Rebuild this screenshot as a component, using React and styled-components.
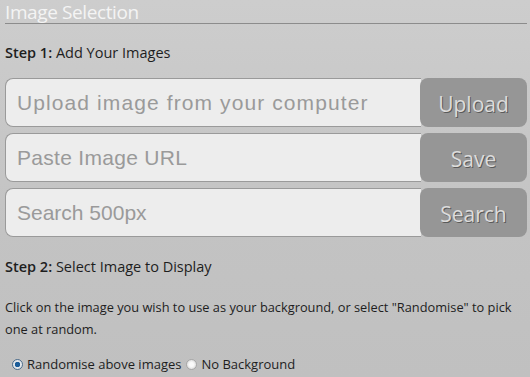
import React from "react";
import styled, { createGlobalStyle } from "styled-components";

const GlobalStyle = createGlobalStyle`
  html, body {
    margin: 0;
    padding: 0;
    background: #c4c4c4;
  }
  body {
    font-family: "Open Sans", "Liberation Sans", sans-serif;
    color: #1e1e1e;
  }
`;

const Panel = styled.div`
  width: 530px;
  height: 377px;
  overflow: hidden;
  box-sizing: border-box;
  padding: 0 3px 0 5px;
  background: linear-gradient(180deg, #cdcdcd 0%, #c3c3c3 60%, #c0c0c0 100%);
`;

const Title = styled.h2`
  margin: 0;
  height: 24px;
  box-sizing: border-box;
  font-size: 19px;
  font-weight: 400;
  line-height: 24px;
  letter-spacing: -0.4px;
  color: #f4f4f4;
  border-bottom: 1px solid #8c8c8c;
`;

const Step = styled.p`
  margin: ${(p) => p.$top}px 0 0;
  font-size: 14.5px;
  line-height: 18px;

  b {
    font-weight: 600;
  }
`;

const Rows = styled.div`
  display: flex;
  flex-direction: column;
  gap: 6px;
  margin-top: 16px;
`;

const Row = styled.div`
  display: flex;
  height: 49px;
`;

const Field = styled.div`
  flex: 1;
  box-sizing: border-box;
  background: #ededed;
  border: 1px solid #9a9a9a;
  border-right: none;
  border-radius: 8px 0 0 8px;
  display: flex;
  align-items: center;
  padding-left: 11px;
  font-family: "Liberation Sans", Arial, sans-serif;
  font-size: 21px;
  letter-spacing: ${(p) => p.$spacing || 0}px;
  color: #9a9a9a;
`;

const Button = styled.div`
  width: 107px;
  margin-left: -1px;
  background: #969696;
  border-radius: 8px;
  display: flex;
  align-items: center;
  justify-content: center;
  padding-top: 2px;
  box-sizing: border-box;
  font-size: 21px;
  color: #dcdcdc;
  text-shadow: 1px 1px 0 #5a5a5a;
`;

const Text = styled.p`
  margin: 20px 0 0;
  font-size: 12.8px;
  line-height: 22px;
`;

const Options = styled.div`
  display: flex;
  align-items: center;
  margin-top: 15px;
  font-size: 13px;
  line-height: 18px;
`;

const Option = styled.label`
  display: flex;
  align-items: center;
  margin-left: ${(p) => (p.$first ? 7 : 5)}px;
`;

const Radio = styled.span`
  width: 9px;
  height: 9px;
  border-radius: 50%;
  margin-right: 4px;
  border: 1px solid ${(p) => (p.$on ? "#4c6d8c" : "#a8a8a8")};
  background: ${(p) =>
    p.$on
      ? "radial-gradient(circle, #1b5d9a 0 2.5px, #e2e6ea 3px)"
      : "radial-gradient(circle, #fafafa 0 2px, #dcdcdc 5px)"};
`;

const inputs = [
  ["Upload image from your computer", "Upload", 1.1],
  ["Paste Image URL", "Save", 0.3],
  ["Search 500px", "Search", 0],
];

const App = () => {
  return (
    <Panel>
      <GlobalStyle />
      <Title>Image Selection</Title>
      <Step $top={20}>
        <b>Step 1:</b> Add Your Images
      </Step>
      <Rows>
        {inputs.map(([placeholder, label, spacing]) => (
          <Row key={label}>
            <Field $spacing={spacing}>{placeholder}</Field>
            <Button>{label}</Button>
          </Row>
        ))}
      </Rows>
      <Step $top={21}>
        <b>Step 2:</b> Select Image to Display
      </Step>
      <Text>
        Click on the image you wish to use as your background, or select
        "Randomise" to pick one at random.
      </Text>
      <Options>
        <Option $first>
          <Radio $on />
          Randomise above images
        </Option>
        <Option>
          <Radio />
          No Background
        </Option>
      </Options>
    </Panel>
  );
};

export default App;
